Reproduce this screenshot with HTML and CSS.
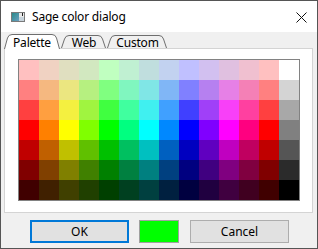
FILE: index.html
```html
<!DOCTYPE html>
<html>
<head>
<meta charset="utf-8">
<link rel="stylesheet" href="styles.css">
</head>
<body>
<div class="window">
  <div class="titlebar">
    <svg class="app-icon" width="14" height="10" viewBox="0 0 14 10">
      <defs>
        <linearGradient id="g" x1="0" y1="0" x2="1" y2="1">
          <stop offset="0" stop-color="#2a8a8a"/>
          <stop offset="1" stop-color="#6aa0c0"/>
        </linearGradient>
      </defs>
      <rect x="0.5" y="0.5" width="13" height="9" fill="#e8e8e8" stroke="#7a7a7a"/>
      <rect x="1" y="1" width="7" height="8" fill="url(#g)"/>
      <rect x="8" y="5" width="5" height="4" fill="#c8d4dc"/>
      <rect x="11" y="1" width="1" height="3" fill="#222"/>
    </svg>
    <span class="title">Sage color dialog</span>
    <svg class="close" width="11" height="11" viewBox="0 0 11 11">
      <path d="M0.5,0.5 L10.5,10.5 M10.5,0.5 L0.5,10.5" stroke="#111" stroke-width="1"/>
    </svg>
  </div>
  <div class="client">
    <div class="tabs">
      <div class="tab tab-palette selected">
        <svg class="tab-shape" width="56" height="15" viewBox="0 0 56 15">
          <path d="M0.5,15 L3.5,4 Q4.5,0.5 8,0.5 L48,0.5 Q51.5,0.5 52.5,4 L55.5,15 Z" fill="#fff"/>
          <path d="M0.5,15 L3.5,4 Q4.5,0.5 8,0.5 L48,0.5 Q51.5,0.5 52.5,4 L55.5,15" fill="none" stroke="#6e6e6e"/>
        </svg>
        <span class="tab-label">Palette</span>
      </div>
      <div class="tab tab-web">
        <svg class="tab-shape" width="45" height="15" viewBox="0 0 45 15">
          <path d="M0.5,14 L3.5,5 Q4.5,1.5 8,1.5 L37,1.5 Q40.5,1.5 41.5,5 L44.5,14 Z" fill="#f0f0f0"/>
          <path d="M0.5,14 L3.5,5 Q4.5,1.5 8,1.5 L37,1.5 Q40.5,1.5 41.5,5 L44.5,14" fill="none" stroke="#6e6e6e"/>
        </svg>
        <span class="tab-label">Web</span>
      </div>
      <div class="tab tab-custom">
        <svg class="tab-shape" width="60" height="15" viewBox="0 0 60 15">
          <path d="M0.5,14 L3.5,5 Q4.5,1.5 8,1.5 L52,1.5 Q55.5,1.5 56.5,5 L59.5,14 Z" fill="#f0f0f0"/>
          <path d="M0.5,14 L3.5,5 Q4.5,1.5 8,1.5 L52,1.5 Q55.5,1.5 56.5,5 L59.5,14" fill="none" stroke="#6e6e6e"/>
        </svg>
        <span class="tab-label">Custom</span>
      </div>
    </div>
    <div class="panel">
      <div class="palette">
        <div style="background:#ffc0c0"></div><div style="background:#f0d2c2"></div><div style="background:#e0dfc0"></div><div style="background:#d2e8c0"></div><div style="background:#c0ffc0"></div><div style="background:#c0f0d2"></div><div style="background:#c0dede"></div><div style="background:#c2d2f0"></div><div style="background:#c0c0ff"></div><div style="background:#d2c0f0"></div><div style="background:#e0c0e0"></div><div style="background:#f0c0d0"></div><div style="background:#ffc0c0"></div><div style="background:#ffffff"></div>
        <div style="background:#ff8080"></div><div style="background:#f5b880"></div><div style="background:#ebe680"></div><div style="background:#b6f080"></div><div style="background:#80ff80"></div><div style="background:#80f6bf"></div><div style="background:#80e6e6"></div><div style="background:#80b6f6"></div><div style="background:#8080ff"></div><div style="background:#b680f0"></div><div style="background:#e680e6"></div><div style="background:#f480b6"></div><div style="background:#ff8080"></div><div style="background:#d4d4d4"></div>
        <div style="background:#ff4040"></div><div style="background:#ff9f40"></div><div style="background:#f4f040"></div><div style="background:#a0f440"></div><div style="background:#40ff40"></div><div style="background:#40ff9f"></div><div style="background:#40f0f0"></div><div style="background:#40a0ff"></div><div style="background:#4040ff"></div><div style="background:#a040f8"></div><div style="background:#f840f8"></div><div style="background:#ff40a0"></div><div style="background:#ff4040"></div><div style="background:#a8a8a8"></div>
        <div style="background:#ff0000"></div><div style="background:#ff8000"></div><div style="background:#ffff00"></div><div style="background:#80ff00"></div><div style="background:#00ff00"></div><div style="background:#00ff80"></div><div style="background:#00ffff"></div><div style="background:#0088ff"></div><div style="background:#0000ff"></div><div style="background:#8000ff"></div><div style="background:#ff00ff"></div><div style="background:#ff0080"></div><div style="background:#ff0000"></div><div style="background:#808080"></div>
        <div style="background:#c00000"></div><div style="background:#c06000"></div><div style="background:#c0c000"></div><div style="background:#60c000"></div><div style="background:#00c000"></div><div style="background:#00c060"></div><div style="background:#00c0c0"></div><div style="background:#0060c0"></div><div style="background:#0000c0"></div><div style="background:#6000c0"></div><div style="background:#c000c0"></div><div style="background:#c00060"></div><div style="background:#c00000"></div><div style="background:#555555"></div>
        <div style="background:#800000"></div><div style="background:#804000"></div><div style="background:#808000"></div><div style="background:#408000"></div><div style="background:#008000"></div><div style="background:#008040"></div><div style="background:#008080"></div><div style="background:#004080"></div><div style="background:#000080"></div><div style="background:#400080"></div><div style="background:#800080"></div><div style="background:#800040"></div><div style="background:#800000"></div><div style="background:#2b2b2b"></div>
        <div style="background:#400000"></div><div style="background:#402000"></div><div style="background:#404000"></div><div style="background:#204000"></div><div style="background:#004000"></div><div style="background:#004020"></div><div style="background:#004040"></div><div style="background:#002040"></div><div style="background:#000040"></div><div style="background:#200040"></div><div style="background:#400040"></div><div style="background:#400020"></div><div style="background:#400000"></div><div style="background:#000000"></div>
      </div>
    </div>
    <div class="buttons">
      <div class="btn btn-ok">OK</div>
      <div class="swatch"></div>
      <div class="btn btn-cancel">Cancel</div>
    </div>
  </div>
</div>
</body>
</html>
```
FILE: styles.css
```css
html, body {
  margin: 0;
  padding: 0;
  background: #ffffff;
}
body {
  font-family: "Noto Sans", "Open Sans", sans-serif;
  font-size: 12px;
  color: #000;
}
.window {
  width: 318px;
  height: 249px;
  box-sizing: border-box;
  border: 1px solid #555555;
  display: flex;
  flex-direction: column;
  background: #f0f0f0;
}
.titlebar {
  height: 31px;
  flex: none;
  background: #ffffff;
  display: flex;
  align-items: center;
}
.app-icon {
  margin-left: 10px;
  margin-top: 1px;
  flex: none;
}
.title {
  margin-left: 7px;
  font-size: 12px;
  letter-spacing: -0.2px;
  line-height: 16px;
  margin-top: 1px;
}
.close {
  margin-left: auto;
  margin-right: 10px;
  margin-top: 1px;
}
.client {
  flex: 1;
  background: #f0f0f0;
  padding: 2px 4px 0 3px;
  display: flex;
  flex-direction: column;
}
.tabs {
  display: flex;
  gap: 1px;
  height: 15px;
  position: relative;
  z-index: 1;
}
.tab {
  position: relative;
  height: 15px;
  display: flex;
  align-items: flex-end;
  justify-content: center;
}
.tab-palette { width: 56px; }
.tab-web { width: 45px; }
.tab-custom { width: 60px; }
.tab-shape {
  position: absolute;
  left: 0;
  top: 0;
}
.tab-label {
  position: relative;
  line-height: 14px;
  font-size: 12px;
  letter-spacing: -0.2px;
  margin-bottom: -1px;
}
.tab-web .tab-label,
.tab-custom .tab-label {
  margin-left: 1px;
}
.panel {
  margin-top: -1px;
  height: 165px;
  box-sizing: border-box;
  border: 1px solid #d4d4d4;
  background: #ffffff;
  padding: 10px 12px 11px 13px;
}
.palette {
  display: grid;
  grid-template-columns: repeat(14, 20px);
  grid-auto-rows: 20px;
  width: 280px;
  border: 1px solid #828282;
}
.buttons {
  display: flex;
  margin-top: 7px;
  padding-left: 26px;
  height: 23px;
}
.btn {
  width: 99px;
  height: 23px;
  box-sizing: border-box;
  background: #e1e1e1;
  display: flex;
  align-items: center;
  justify-content: center;
  font-size: 12px;
}
.btn-ok {
  border: 2px solid #0078d7;
}
.btn-cancel {
  border: 1px solid #adadad;
  margin-left: 11px;
}
.swatch {
  width: 40px;
  height: 23px;
  box-sizing: border-box;
  margin-left: 10px;
  background: #00ff00;
  border: 1px solid #a0a0a0;
}
```
